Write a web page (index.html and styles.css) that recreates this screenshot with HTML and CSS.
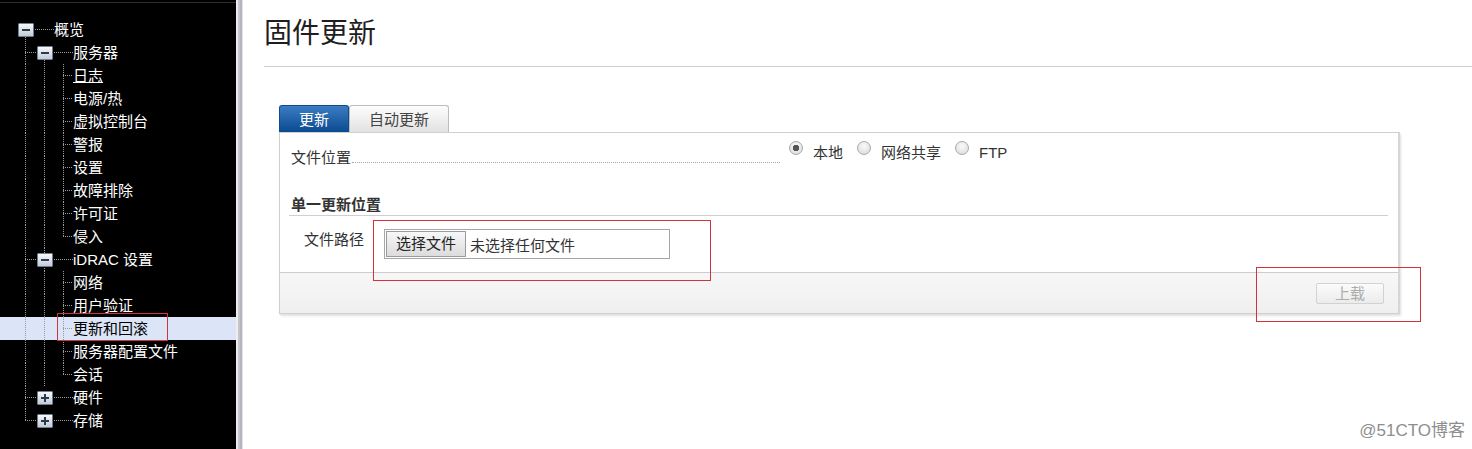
FILE: index.html
```html
<!DOCTYPE html>
<html lang="zh-CN">
<head>
    <meta charset="UTF-8">
    <title>固件更新</title>
    <link rel="stylesheet" href="styles.css">
</head>
<body>

<!-- 左侧导航树 -->
<div class="sidebar">
    <div class="top-rule"></div>
    <div class="tree">
        <div class="row"><span class="g box-down"><i class="exp minus"></i></span><span class="g hline"></span><span class="lbl">概览</span></div>
        <div class="row"><span class="g tee"></span><span class="g box-down left"><i class="exp minus"></i></span><span class="g hline"></span><span class="lbl">服务器</span></div>
        <div class="row"><span class="g vline"></span><span class="g vline"></span><span class="g tee"></span><span class="lbl link">日志</span></div>
        <div class="row"><span class="g vline"></span><span class="g vline"></span><span class="g tee"></span><span class="lbl">电源/热</span></div>
        <div class="row"><span class="g vline"></span><span class="g vline"></span><span class="g tee"></span><span class="lbl">虚拟控制台</span></div>
        <div class="row"><span class="g vline"></span><span class="g vline"></span><span class="g tee"></span><span class="lbl">警报</span></div>
        <div class="row"><span class="g vline"></span><span class="g vline"></span><span class="g tee"></span><span class="lbl">设置</span></div>
        <div class="row"><span class="g vline"></span><span class="g vline"></span><span class="g tee"></span><span class="lbl">故障排除</span></div>
        <div class="row"><span class="g vline"></span><span class="g vline"></span><span class="g tee"></span><span class="lbl">许可证</span></div>
        <div class="row"><span class="g vline"></span><span class="g vline"></span><span class="g elbow"></span><span class="lbl">侵入</span></div>
        <div class="row"><span class="g tee"></span><span class="g box-through left"><i class="exp minus"></i></span><span class="g hline"></span><span class="lbl">iDRAC 设置</span></div>
        <div class="row"><span class="g vline"></span><span class="g vline"></span><span class="g tee"></span><span class="lbl">网络</span></div>
        <div class="row"><span class="g vline"></span><span class="g vline"></span><span class="g tee"></span><span class="lbl">用户验证</span></div>
        <div class="row selected"><span class="g vline"></span><span class="g vline"></span><span class="g tee"></span><span class="lbl">更新和回滚</span></div>
        <div class="row"><span class="g vline"></span><span class="g vline"></span><span class="g tee"></span><span class="lbl">服务器配置文件</span></div>
        <div class="row"><span class="g vline"></span><span class="g vline"></span><span class="g elbow"></span><span class="lbl">会话</span></div>
        <div class="row"><span class="g tee"></span><span class="g box-left"><i class="exp plus"></i></span><span class="g hline"></span><span class="lbl">硬件</span></div>
        <div class="row"><span class="g elbow"></span><span class="g box-left"><i class="exp plus"></i></span><span class="g hline"></span><span class="lbl">存储</span></div>
    </div>
    <div class="mark mark-nav"></div>
</div>
<div class="divider"></div>

<!-- 右侧内容 -->
<div class="main">
    <h1>固件更新</h1>

    <div class="tabset">
        <div class="tabs">
            <span class="tab active">更新</span>
            <span class="tab">自动更新</span>
        </div>
        <div class="panel">
            <div class="panel-body">
                <div class="loc-row">
                    <div class="loc-label"><span>文件位置</span><span class="leader"></span></div>
                    <div class="radios">
                        <label class="opt"><span class="radio checked"></span>本地</label>
                        <label class="opt"><span class="radio"></span>网络共享</label>
                        <label class="opt"><span class="radio"></span>FTP</label>
                    </div>
                </div>

                <h3 class="section">单一更新位置</h3>

                <div class="path-row">
                    <span class="path-label">文件路径</span>
                    <div class="file-box">
                        <span class="file-btn">选择文件</span>
                        <span class="file-name">未选择任何文件</span>
                    </div>
                </div>
            </div>
            <div class="panel-foot">
                <button class="upload" disabled>上载</button>
            </div>
            <div class="mark mark-file"></div>
            <div class="mark mark-upload"></div>
        </div>
    </div>

    <div class="watermark">@51CTO博客</div>
</div>

</body>
</html>
```

FILE: styles.css
```css
html, body {
    margin: 0;
    height: 100%;
}
body {
    display: flex;
    font-family: "Liberation Sans", "Noto Sans CJK SC", sans-serif;
    font-size: 15px;
    color: #333;
    background: #fff;
    overflow: hidden;
}

/* 导航树 */
.sidebar {
    position: relative;
    width: 236px;
    flex: none;
    background: #000;
}
.top-rule {
    height: 1px;
    margin-top: 2px;
    background: #2c2c2c;
}
.tree {
    margin-top: 15px;
    --dotv: repeating-linear-gradient(to bottom, #9a9a9a 0 1px, transparent 1px 2px);
    --doth: repeating-linear-gradient(to right, #9a9a9a 0 1px, transparent 1px 2px);
}
.row {
    display: flex;
    align-items: center;
    height: 23px;
    padding-left: 16px;
}
.row.selected {
    background: #dbe5f7;
}
.g {
    flex: none;
    width: 19px;
    height: 23px;
    display: flex;
    align-items: center;
    justify-content: center;
    background-repeat: no-repeat;
}
.vline {
    background-image: var(--dotv);
    background-size: 1px 100%;
    background-position: 9px 0;
}
.tee {
    background-image: var(--dotv), var(--doth);
    background-size: 1px 100%, 10px 1px;
    background-position: 9px 0, 9px 11px;
}
.elbow {
    background-image: var(--dotv), var(--doth);
    background-size: 1px 12px, 10px 1px;
    background-position: 9px 0, 9px 11px;
}
.hline {
    background-image: var(--doth);
    background-size: 100% 1px;
    background-position: 0 11px;
}
.box-down {
    background-image: var(--dotv);
    background-size: 1px 12px;
    background-position: 9px 11px;
}
.box-down.left {
    background-image: var(--dotv), var(--doth);
    background-size: 1px 12px, 10px 1px;
    background-position: 9px 11px, 0 11px;
}
.box-through.left {
    background-image: var(--dotv), var(--doth);
    background-size: 1px 100%, 10px 1px;
    background-position: 9px 0, 0 11px;
}
.box-left {
    background-image: var(--doth);
    background-size: 10px 1px;
    background-position: 0 11px;
}
.exp {
    display: block;
    width: 14px;
    height: 12px;
    border: 1px solid #6f7e8e;
    border-radius: 1px;
    background: linear-gradient(#2c3a4e, #2c3a4e) center / 8px 2px no-repeat,
                linear-gradient(#f6f8fb, #c2ccd7);
}
.exp.plus {
    background: linear-gradient(#2c3a4e, #2c3a4e) center / 8px 2px no-repeat,
                linear-gradient(#2c3a4e, #2c3a4e) center / 2px 8px no-repeat,
                linear-gradient(#f6f8fb, #c2ccd7);
}
.lbl {
    color: #fff;
    white-space: nowrap;
    line-height: 23px;
}
.lbl.link {
    text-decoration: underline;
}
.selected .lbl {
    color: #000;
}
.divider {
    flex: none;
    width: 7px;
    background: linear-gradient(to right, #ededed 0 2px, #c4c4cc 2px 4px, #b4b4bc 4px 6px, #e4e4e8 6px);
}

/* 主区域 */
.main {
    position: relative;
    flex: 1;
    padding-top: 17px;
}
h1 {
    margin: 0 0 0 21px;
    padding: 0 0 15px 0;
    font-size: 28px;
    font-weight: normal;
    line-height: 34px;
    color: #1e1e1e;
    border-bottom: 1px solid #cfcfcf;
}
.tabset {
    margin: 38px 0 0 36px;
    width: 1121px;
}
.tabs {
    display: flex;
    height: 27px;
}
.tab {
    box-sizing: border-box;
    height: 27px;
    line-height: 27px;
    padding: 0 19px;
    border: 1px solid #bdbdbd;
    border-bottom: none;
    border-radius: 3px 3px 0 0;
    background: linear-gradient(#fdfdfd, #e2e2e2);
    color: #444;
}
.tab.active {
    width: 70px;
    padding: 0;
    text-align: center;
    color: #fff;
    border-color: #0f4c8c;
    background: linear-gradient(#3a7cc4, #0c4a90);
}
.panel {
    position: relative;
    border: 1px solid #d0d0d0;
    border-right: 2px solid #d6d6d6;
    box-shadow: 1px 2px 2px rgba(0, 0, 0, 0.12);
}
.panel-body {
    padding: 10px 0 13px;
}
.loc-row {
    display: flex;
    height: 28px;
    padding-left: 11px;
}
.loc-label {
    width: 489px;
    display: flex;
    align-items: baseline;
    padding-top: 4px;
    line-height: 22px;
}
.leader {
    flex: 1;
    margin-left: 1px;
    border-bottom: 1px dotted #a8a8a8;
}
.radios {
    display: flex;
    margin-left: 9px;
    line-height: 20px;
}
.opt {
    display: flex;
    align-items: flex-start;
    margin-right: 14px;
    color: #333;
}
.radio {
    box-sizing: border-box;
    width: 14px;
    height: 14px;
    margin: -2px 10px 0 0;
    border: 1px solid #a9a9a9;
    border-radius: 50%;
    background: radial-gradient(circle at 50% 35%, #fafafa, #d8d8d8);
}
.radio.checked {
    background: radial-gradient(circle, #555 0 3px, transparent 3.5px),
                radial-gradient(circle at 50% 35%, #fafafa, #d8d8d8);
}
.section {
    margin: 24px 10px 0 9px;
    padding-left: 2px;
    font-size: 15px;
    line-height: 20px;
    font-weight: bold;
    color: #333;
    border-bottom: 1px solid #cfcfcf;
}
.path-row {
    display: flex;
    align-items: flex-start;
    margin-top: 13px;
    padding-left: 24px;
}
.path-label {
    width: 80px;
    padding-top: 1px;
    line-height: 20px;
}
.file-box {
    box-sizing: border-box;
    display: flex;
    align-items: center;
    width: 286px;
    height: 30px;
    padding: 0 1px;
    border: 1px solid #a6a6a6;
}
.file-btn {
    box-sizing: border-box;
    width: 80px;
    height: 26px;
    line-height: 24px;
    text-align: center;
    border: 1px solid #9a9a9a;
    background: linear-gradient(#f7f7f7, #dcdcdc);
    color: #222;
}
.file-name {
    margin-left: 4px;
    color: #333;
}
.panel-foot {
    display: flex;
    justify-content: flex-end;
    padding: 10px 14px 9px;
    border-top: 1px solid #cdcdcd;
    background: linear-gradient(#f7f7f7, #efefef);
}
.upload {
    width: 68px;
    height: 21px;
    padding: 0;
    font: inherit;
    font-size: 15px;
    line-height: 19px;
    color: #acacac;
    border: 1px solid #d2d2d2;
    border-radius: 2px;
    background: linear-gradient(#fbfbfb, #ececec);
}

/* 标注框 */
.mark {
    position: absolute;
    border: 1px solid #d0333d;
}
.mark-nav {
    left: 57px;
    top: 313px;
    width: 109px;
    height: 26px;
}
.mark-file {
    left: 93px;
    top: 87px;
    width: 336px;
    height: 59px;
}
.mark-upload {
    left: 976px;
    top: 134px;
    width: 163px;
    height: 53px;
}
.watermark {
    position: absolute;
    right: 7px;
    bottom: 8px;
    font-size: 17px;
    color: #8e8e8e;
}
```
